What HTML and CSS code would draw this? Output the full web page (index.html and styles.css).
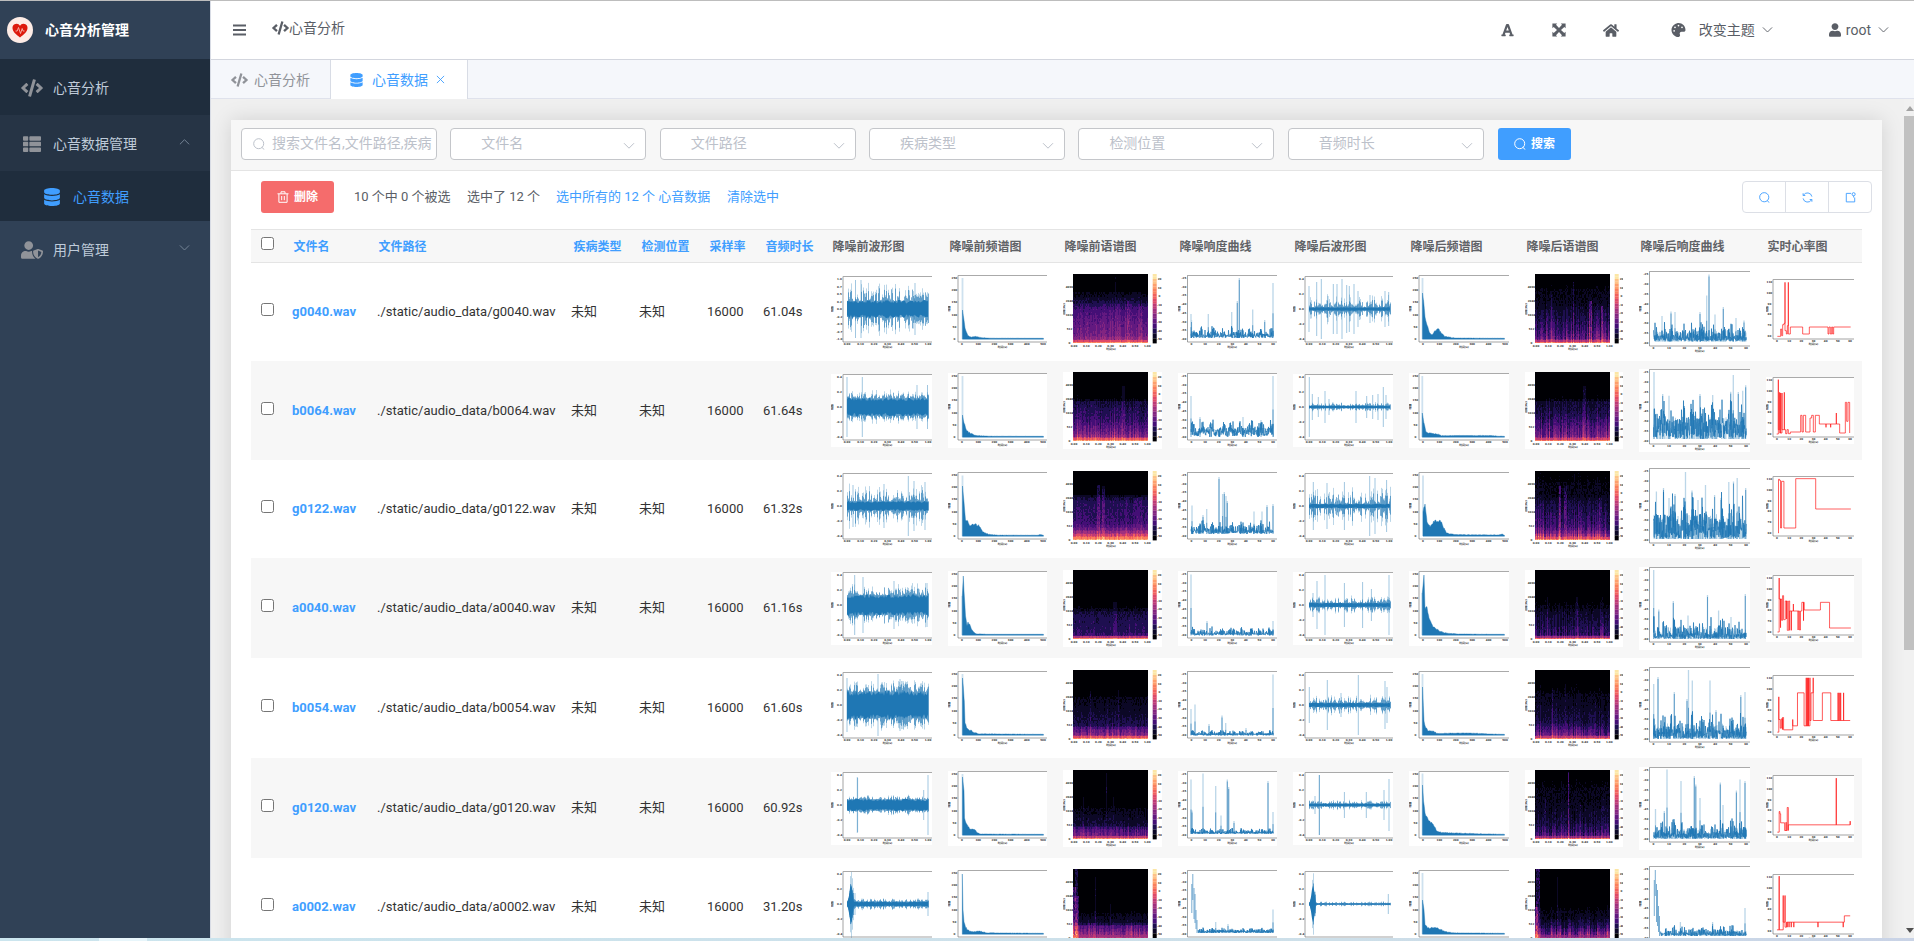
FILE: index.html
```html
<!DOCTYPE html>
<html lang="zh-CN">
<head>
<meta charset="utf-8">
<title>心音分析管理</title>
<link rel="stylesheet" href="styles.css">
</head>
<body>
<svg class="sprite" aria-hidden="true">
  <symbol id="i-code" viewBox="0 0 640 512"><path d="M278.9 511.5l-61-17.7c-6.4-1.8-10-8.5-8.2-14.9L346.2 8.7c1.8-6.4 8.5-10 14.9-8.2l61 17.7c6.4 1.8 10 8.5 8.2 14.9L293.8 503.3c-1.9 6.4-8.5 10.1-14.9 8.2zm-114-112.2l43.5-46.4c4.6-4.9 4.3-12.7-.8-17.2L117 256l90.6-79.7c5.1-4.5 5.5-12.3.8-17.2l-43.5-46.4c-4.5-4.8-12.1-5.1-17-.5L3.8 247.2c-5.1 4.7-5.1 12.8 0 17.5l144.1 135.1c4.9 4.6 12.5 4.4 17-.5zm327.2.6l144.1-135.1c5.1-4.7 5.1-12.8 0-17.5L492.1 112.1c-4.8-4.5-12.4-4.3-17 .5L431.6 159c-4.6 4.9-4.3 12.7.8 17.2L523 256l-90.6 79.7c-5.1 4.5-5.5 12.3-.8 17.2l43.5 46.4c4.5 4.9 12.1 5.1 17 .6z"/></symbol>
  <symbol id="i-db" viewBox="0 0 448 512"><path d="M448 73.143v45.714C448 159.143 347.667 192 224 192S0 159.143 0 118.857V73.143C0 32.857 100.333 0 224 0s224 32.857 224 73.143zM448 176v102.857C448 319.143 347.667 352 224 352S0 319.143 0 278.857V176c48.125 33.143 136.208 48.572 224 48.572S399.874 209.143 448 176zm0 160v102.857C448 479.143 347.667 512 224 512S0 479.143 0 438.857V336c48.125 33.143 136.208 48.572 224 48.572S399.874 369.143 448 336z"/></symbol>
  <symbol id="i-list" viewBox="0 0 512 512"><path d="M24 32h101a24 24 0 0 1 24 24v80a24 24 0 0 1-24 24H24a24 24 0 0 1-24-24V56a24 24 0 0 1 24-24zM24 192h101a24 24 0 0 1 24 24v80a24 24 0 0 1-24 24H24a24 24 0 0 1-24-24v-80a24 24 0 0 1 24-24zM24 352h101a24 24 0 0 1 24 24v80a24 24 0 0 1-24 24H24a24 24 0 0 1-24-24v-80a24 24 0 0 1 24-24zM205 32h283a24 24 0 0 1 24 24v80a24 24 0 0 1-24 24H205a24 24 0 0 1-24-24V56a24 24 0 0 1 24-24zM205 192h283a24 24 0 0 1 24 24v80a24 24 0 0 1-24 24H205a24 24 0 0 1-24-24v-80a24 24 0 0 1 24-24zM205 352h283a24 24 0 0 1 24 24v80a24 24 0 0 1-24 24H205a24 24 0 0 1-24-24v-80a24 24 0 0 1 24-24z"/></symbol>
  <symbol id="i-user" viewBox="0 0 448 512"><path d="M224 256c70.7 0 128-57.3 128-128S294.7 0 224 0 96 57.3 96 128s57.3 128 128 128zm89.6 32h-16.7c-22.2 10.2-46.9 16-72.9 16s-50.6-5.8-72.9-16h-16.7C60.2 288 0 348.2 0 422.4V464c0 26.5 21.5 48 48 48h352c26.5 0 48-21.5 48-48v-41.6c0-74.2-60.2-134.4-134.4-134.4z"/></symbol>
  <symbol id="i-shield" viewBox="0 0 640 512"><path d="M622.3 271.1l-115.2-45c-4.1-1.6-12.6-3.7-22.2 0l-115.2 45c-10.7 4.2-17.7 14-17.7 24.9 0 111.6 68.7 188.8 132.9 213.9 9.6 3.7 18 1.6 22.2 0C558.4 489.9 640 420.5 640 296c0-10.9-7-20.7-17.7-24.9zM496 462.4V273.3l95.5 37.3c-5.6 87.1-60.9 135.4-95.5 151.8zM224 256c70.7 0 128-57.3 128-128S294.7 0 224 0 96 57.3 96 128s57.3 128 128 128zm96 40c0-2.5.8-4.8 1.1-7.2-2.5-.1-4.9-.8-7.5-.8h-16.7c-22.2 10.2-46.9 16-72.9 16s-50.6-5.8-72.9-16h-16.7C60.2 288 0 348.2 0 422.4V464c0 26.5 21.5 48 48 48h352c6.8 0 13.3-1.5 19.2-4-54-42.9-99.2-116.7-99.2-212z"/></symbol>
  <symbol id="i-palette" viewBox="0 0 512 512"><path d="M204.3 5C104.9 24.4 24.8 104.3 5.2 203.4c-37 187 131.7 326.4 258.8 306.7 41.2-6.4 61.4-54.6 42.5-91.7-23.1-45.4 9.9-98.4 60.9-98.4h79.7c35.8 0 64.8-29.6 64.9-65.3C511.5 97.1 368.1-26.9 204.3 5zM96 320c-17.7 0-32-14.3-32-32s14.3-32 32-32 32 14.3 32 32-14.3 32-32 32zm32-128c-17.7 0-32-14.3-32-32s14.3-32 32-32 32 14.3 32 32-14.3 32-32 32zm128-64c-17.7 0-32-14.3-32-32s14.3-32 32-32 32 14.3 32 32-14.3 32-32 32zm128 64c-17.7 0-32-14.3-32-32s14.3-32 32-32 32 14.3 32 32-14.3 32-32 32z"/></symbol>
  <symbol id="i-home" viewBox="0 0 576 512"><path d="M280.37 148.26L96 300.11V464a16 16 0 0 0 16 16l112.06-.29a16 16 0 0 0 15.92-16V368a16 16 0 0 1 16-16h64a16 16 0 0 1 16 16v95.64a16 16 0 0 0 16 16.05L464 480a16 16 0 0 0 16-16V300L295.67 148.26a12.19 12.19 0 0 0-15.3 0zM571.6 251.47L488 182.56V44.05a12 12 0 0 0-12-12h-56a12 12 0 0 0-12 12v72.61L318.47 43a48 48 0 0 0-61 0L4.34 251.47a12 12 0 0 0-1.6 16.9l25.5 31A12 12 0 0 0 45.15 301l235.22-193.74a12.19 12.19 0 0 1 15.3 0L530.9 301a12 12 0 0 0 16.9-1.6l25.5-31a12 12 0 0 0-1.7-16.93z"/></symbol>
  <symbol id="i-expand" viewBox="0 0 14 14"><path d="M.4.4h4.800L4 1.700l3 3.300 3-3.300L8.800.4h4.800v4.800L12.300 4 9 7l3.300 3 1.300-1.200v4.800H8.800L10 12.300 7 9l-3 3.300 1.200 1.300H.4V8.800L1.700 10 5 7 1.700 4 .4 5.200z"/></symbol>
  <symbol id="i-font" viewBox="0 0 448 512"><path fill-rule="evenodd" d="M432 416h-23.400L277.900 53.700A32 32 0 0 0 247.600 32h-47.200a32 32 0 0 0-30.300 21.700L39.400 416H16a16 16 0 0 0-16 16v32a16 16 0 0 0 16 16h128a16 16 0 0 0 16-16v-32a16 16 0 0 0-16-16h-19.600l23.300-64h152.600l23.300 64H304a16 16 0 0 0-16 16v32a16 16 0 0 0 16 16h128a16 16 0 0 0 16-16v-32a16 16 0 0 0-16-16zM176.900 272L224 142.500 271.200 272z"/></symbol>
  <symbol id="i-bars" viewBox="0 0 13 12"><path d="M0 .4h13v2H0zM0 5h13v2H0zM0 9.6h13v2H0z"/></symbol>
  <symbol id="i-down" viewBox="0 0 12 8"><path class="line" d="M1 1.2l5 5 5-5"/></symbol>
  <symbol id="i-up" viewBox="0 0 12 8"><path class="line" d="M1 6.5l5-5 5 5"/></symbol>
  <symbol id="i-search" viewBox="0 0 12 12"><circle class="line" cx="5.700" cy="5.700" r="5"/><path class="line" d="M8.800 9.300l2.500 2.300"/></symbol>
  <symbol id="i-close" viewBox="0 0 10 10"><path class="line" d="M1 1l8 8M9 1L1 9"/></symbol>
  <symbol id="i-trash" viewBox="0 0 12 12"><path class="line" d="M.5 2.8h11M4 2.5V.8h4v1.7M1.9 3v8.3h8.2V3M4.7 5v4.2M7.3 5v4.2"/></symbol>
  <symbol id="i-refresh" viewBox="0 0 12 12"><path class="line" d="M1.2 1.4v2.4h2.4M1.5 3.6A5 5 0 0 1 10.8 5M1.2 7a5 5 0 0 0 9.3 1.4M10.8 10.6V8.2H8.4"/></symbol>
  <symbol id="i-share" viewBox="0 0 12 12"><path class="line" d="M6.600 1.500H1.400v9.300h9.200V6"/><circle class="line" cx="9.400" cy="2.400" r="1.700"/><path class="line" d="M9.400 4v2"/></symbol>
</svg>

<div class="app">
  <aside class="side">
    <div class="brand">
      <svg class="logo" viewBox="0 0 26 26"><circle cx="13" cy="13" r="13" fill="#fdece6"/><path d="M13 20.5C9 17.500 5.500 14.500 5.500 11A4 4 0 0 1 13 8.800 4 4 0 0 1 20.500 11C20.500 14.500 17 17.500 13 20.500z" fill="#dd1a0c"/><path d="M8.500 14h1.700l1.300-3.500 2 6 1.700-5 .8 2.500h1.500" fill="none" stroke="#f8b5ab" stroke-width=".9"/></svg>
      <span>心音分析管理</span>
    </div>
    <div class="item dark"><svg class="ic w22"><use href="#i-code"/></svg><span>心音分析</span></div>
    <div class="item mid"><svg class="ic w22 h18"><use href="#i-list"/></svg><span>心音数据管理</span><svg class="arr"><use href="#i-up"/></svg></div>
    <div class="item sub"><svg class="ic w18"><use href="#i-db"/></svg><span>心音数据</span></div>
    <div class="item"><svg class="ic w22 h18"><use href="#i-shield"/></svg><span>用户管理</span><svg class="arr"><use href="#i-down"/></svg></div>
  </aside>

  <div class="main">
    <header class="top">
      <svg class="bars"><use href="#i-bars"/></svg>
      <div class="crumb"><svg><use href="#i-code"/></svg><span>心音分析</span></div>
      <div class="tools">
        <svg class="t-font"><use href="#i-font"/></svg>
        <svg class="t-exp"><use href="#i-expand"/></svg>
        <svg class="t-home"><use href="#i-home"/></svg>
        <div class="theme"><svg class="t-pal"><use href="#i-palette"/></svg><span>改变主题</span><svg class="dn"><use href="#i-down"/></svg></div>
        <div class="who"><svg class="t-user"><use href="#i-user"/></svg><span>root</span><svg class="dn"><use href="#i-down"/></svg></div>
      </div>
    </header>
    <nav class="tabs">
      <div class="tab t1"><svg class="tc"><use href="#i-code"/></svg><span>心音分析</span></div>
      <div class="tab t2"><svg class="td"><use href="#i-db"/></svg><span>心音数据</span><svg class="tx"><use href="#i-close"/></svg></div>
    </nav>
    <div class="view">
      <section class="card">
        <div class="filters">
          <div class="field search"><svg><use href="#i-search"/></svg><span>搜索文件名,文件路径,疾病</span></div>
          <div class="field sel"><span>文件名</span><svg><use href="#i-down"/></svg></div>
          <div class="field sel"><span>文件路径</span><svg><use href="#i-down"/></svg></div>
          <div class="field sel"><span>疾病类型</span><svg><use href="#i-down"/></svg></div>
          <div class="field sel"><span>检测位置</span><svg><use href="#i-down"/></svg></div>
          <div class="field sel"><span>音频时长</span><svg><use href="#i-down"/></svg></div>
          <div class="btn blue"><svg><use href="#i-search"/></svg><span>搜索</span></div>
        </div>
        <div class="actions">
          <div class="btn red"><svg><use href="#i-trash"/></svg><span>删除</span></div>
          <span class="a1">10 个中 0 个被选</span>
          <span class="a2">选中了 12 个</span>
          <a class="a3">选中所有的 12 个 心音数据</a>
          <a class="a4">清除选中</a>
          <div class="group">
            <div><svg><use href="#i-search"/></svg></div>
            <div><svg><use href="#i-refresh"/></svg></div>
            <div><svg><use href="#i-share"/></svg></div>
          </div>
        </div>
        <div class="table" id="table">
          <div class="row head">
            <div><i class="cb"></i></div>
            <div class="lk">文件名</div><div class="lk">文件路径</div><div class="lk">疾病类型</div><div class="lk">检测位置</div><div class="lk">采样率</div><div class="lk">音频时长</div>
            <div>降噪前波形图</div><div>降噪前频谱图</div><div>降噪前语谱图</div><div>降噪响度曲线</div><div>降噪后波形图</div><div>降噪后频谱图</div><div>降噪后语谱图</div><div>降噪后响度曲线</div><div>实时心率图</div>
          </div>
        </div>
      </section>
      <div class="sbar"><i class="up"></i><i class="thumb"></i><i class="down"></i></div>
    </div>
  </div>
</div>
<div class="strip"><i></i></div>
<script src="charts.js"></script>
</body>
</html>
```
FILE: styles.css
```css
* { box-sizing: border-box; }
body { margin: 0; width: 1914px; height: 941px; overflow: hidden; background: #f0f0f0; color: #5a5e66; font: 14px/20px Roboto, "Noto Sans CJK SC", sans-serif; display: flex; flex-direction: column; }
.sprite { position: absolute; width: 0; height: 0; }
svg { display: block; flex: none; fill: currentColor; }
.line { fill: none; stroke: currentColor; stroke-width: 1; }
span, a { white-space: nowrap; }

.app { display: flex; height: 938px; flex: none; border-top: 1px solid #bdbdbd; }
.side { width: 210px; flex: none; background: #304156; }
.brand { height: 58px; display: flex; align-items: center; padding-left: 7px; gap: 12px; color: #fff; font-weight: bold; }
.logo { width: 26px; height: 26px; }
.item { height: 56px; display: flex; align-items: center; padding: 2px 0 0 21px; color: #bfcbd9; }
.item .ic { width: 22px; height: 18px; margin-right: 10px; color: #909399; }
.item.dark { background: #1f2d3d; }
.item.mid { background: #263445; }
.item.sub { background: #1f2d3d; height: 50px; padding-left: 43px; color: #409eff; }
.item.sub .ic { color: #409eff; margin-right: 12px; width: 18px; }
.item .arr { width: 11px; height: 8px; margin: -5px 20px 0 auto; color: #7c8b9d; }

.main { flex: 1; display: flex; flex-direction: column; min-width: 0; border-left: 1px solid #d8dce5; }
.top { height: 59px; background: #fff; border-bottom: 1px solid #d3d6de; display: flex; align-items: center; padding-left: 22px; flex: none; }
.bars { width: 13px; height: 12px; margin-right: 26px; }
.crumb { display: flex; align-items: center; margin-top: -5px; }
.crumb svg { width: 17px; height: 14px; }
.tools { display: flex; align-items: center; margin-left: auto; padding-right: 25px; }
.t-font { width: 13px; height: 14px; margin-right: 38px; }
.t-exp { width: 14px; height: 14px; margin-right: 37px; }
.t-home { width: 16px; height: 15px; margin-right: 52px; }
.theme, .who { display: flex; align-items: center; }
.t-pal { width: 15px; height: 14px; margin-right: 13px; }
.dn { width: 11px; height: 8px; margin-left: 7px; }
.who { margin-left: 56px; }
.t-user { width: 12px; height: 14px; margin-right: 5px; }
.tabs { height: 39px; flex: none; display: flex; background: #f5f7fb; border-bottom: 1px solid #dfe2ec; }
.tab { display: flex; align-items: center; border-right: 1px solid #d8dce5; height: 39px; color: #909399; }
.t1 { width: 120px; padding-left: 20px; }
.tc { width: 17px; height: 14px; margin-right: 6px; }
.t2 { width: 137px; padding-left: 19px; background: #fff; color: #409eff; }
.td { width: 13px; height: 14px; margin-right: 9px; }
.tx { width: 9px; height: 9px; margin-left: 8px; }

.view { flex: 1; display: flex; overflow: hidden; padding: 21px 0 0 20px; background: #f0f0f0; }
.card { width: 1651px; height: 900px; flex: none; background: #fff; box-shadow: 0 0 20px rgba(0,0,0,.13); }
.filters { height: 51px; background: #f7f7f7; border-bottom: 1px solid #e4e4e4; display: flex; gap: 13.350px; padding: 8px 0 0 10px; }
.field { width: 196px; height: 32px; border: 1px solid #c4c6ca; border-radius: 4px; background: #fff; color: #bcc1ca; display: flex; align-items: center; overflow: hidden; }
.search svg { width: 12px; height: 12px; margin: 0 7px 0 11px; }
.sel { padding: 0 10px 0 30px; justify-content: space-between; }
.sel svg { width: 12px; height: 8px; margin-top: 3px; }
.field span { margin-top: -3px; }
.btn { width: 73px; height: 32px; border-radius: 3px; color: #fff; display: flex; align-items: center; justify-content: center; gap: 5px; font-size: 12px; font-weight: 500; flex: none; }
.btn svg { width: 12px; height: 12px; }
.blue { background: #409eff; margin-left: 1px; }
.red { background: #f56c6c; }
.btn span { font-weight: bold; }
.actions { height: 58px; display: flex; align-items: flex-start; padding: 10px 10px 0 30px; font-size: 13px; line-height: 32px; }
.a1 { width: 113px; margin-left: 20px; }
.a2 { width: 89px; }
.a3 { width: 171px; color: #409eff; }
.a4 { color: #409eff; }
.group { margin-left: auto; display: flex; width: 130px; height: 32px; border: 1px solid #dcdfe6; border-radius: 4px; color: #409eff; }
.group div { flex: 1; display: flex; align-items: center; justify-content: center; }
.group div + div { border-left: 1px solid #dcdfe6; }
.group svg { width: 11px; height: 11px; }

.table { margin-left: 20px; width: 1611px; }
.row { display: grid; grid-template-columns: 31px 85px 195px 68px 68px 56px 67px 117px 115px 115px 115px 116px 116px 114px 127px 106px; align-items: center; font-size: 13px; color: #333; }
.row > div { padding-left: 10px; white-space: nowrap; }
.row > div:nth-child(n+4):nth-child(-n+7) { padding-left: 9px; }
.row.even { background: #f7f7f7; }
.head { height: 34px; background: #f7f7f7; border-top: 1px solid #e4e4e4; border-bottom: 1px solid #e4e4e4; font-size: 12px; font-weight: bold; color: #606266; }
.head > div, .head > div:nth-child(n+4):nth-child(-n+7) { padding: 2px 0 0 11.500px; }
.head > div:first-child { padding: 0 0 0 10px; }
.head .lk, .name { color: #409eff; }
.name { font-weight: bold; }
.cb { display: block; width: 13px; height: 13px; border: 1px solid #767676; border-radius: 2.500px; background: #fff; margin-top: -5px; }
.row svg { overflow: hidden; background: #fff; }
.tick { font: bold 2.700px "DejaVu Sans", "Noto Sans CJK SC", sans-serif; fill: #333; text-anchor: middle; }

.sbar { width: 10px; margin: -21px 0 0 auto; background: #f1f1f1; position: relative; flex: none; }
.sbar i { display: block; }
.up { width: 8px; height: 5px; margin: 7px 0 5px 2px; background: #a3a3a3; clip-path: polygon(50% 0, 100% 100%, 0 100%); }
.thumb { height: 534px; background: #c1c1c1; }
.down { position: absolute; left: 2px; bottom: 5px; width: 8px; height: 5px; background: #505050; clip-path: polygon(0 0, 100% 0, 50% 100%); }
.strip { height: 3px; flex: none; background: linear-gradient(90deg, #cbe5ee, #cddfe9 70%, #c9d3e6); padding-left: 99px; }
.strip i { display: block; width: 48px; height: 3px; background: #e8f6fb; }
```
FILE: charts.js
```js
const BLUE = '#1f77b4';
let seed = 7;
const rnd = () => (seed = (seed * 16807) % 2147483647) / 2147483647;
const f1 = n => n.toFixed(1);

function frame(w, h, left, bottom, xs, ys) {
  let s = `<path d="M${left} .5H${w}M${left} .5V${bottom}H${w}" fill="none" stroke="#666" stroke-width=".6"/><path d="M${left} .5H${w}" stroke="#aaa" stroke-width="1"/>`;
  xs.forEach((t, i) => { s += `<text class="tick" x="${f1(left + 4 + i * (w - left - 8) / (xs.length - 1))}" y="${bottom + 3.4}">${t}</text>`; });
  ys.forEach((t, i) => { s += `<text class="tick" x="${left - 3.6}" y="${f1(bottom - 2 - i * (bottom - 6) / (ys.length - 1))}">${t}</text>`; });
  s += `<text class="tick" x="${(w + left) / 2}" y="${bottom + 6.3}">时间(s)</text>`;
  s += `<text class="tick" transform="translate(2.2 ${bottom / 2}) rotate(-90)">幅值</text>`;
  return s;
}
const svg = (w, h, body) => `<svg width="${w}" height="${h}" viewBox="0 0 ${w} ${h}">${body}</svg>`;
const T7 = ['0.00', '0.10', '0.20', '0.30', '0.40', '0.50', '1.00'];
const T6 = ['0', '10', '20', '30', '40', '50', '60'];
const Y9 = ['-1.0', '-0.7', '-0.5', '-0.2', '0.0', '0.2', '0.5', '0.7', '1.0'];
const Y5 = ['-0.4', '-0.2', '0.0', '0.2', '0.4'];

/* core: solid half height, noise: mean peak reach, spikes: [x, half height] */
function wave(w, c) {
  let light = '', mid = '', top = '', bot = '';
  for (let x = 16; x <= 97; x += 1) {
    const burst = c.burst && x < 23 ? 30 * Math.exp(-Math.pow((x - 20) / 2, 2)) : 0;
    const g = Math.pow(rnd(), 1.6);
    const a = c.core + c.noise * g * (.8 + .3 * rnd()) + burst, b = c.core + c.noise * g * (.8 + .3 * rnd()) + burst;
    const p = .5 + .4 * rnd();
    if (rnd() < .85) light += `M${x + .5} ${f1(33 - a)}V${f1(33 + b)}`;
    mid += `M${x + .5} ${f1(33 - c.core - (a - c.core) * p * .9)}V${f1(33 + c.core + (b - c.core) * p * .9)}`;
    top += `L${x} ${f1(33 - c.core * (.7 + .45 * rnd()) - burst * .6)}`;
    bot = `L${x} ${f1(33 + c.core * (.7 + .45 * rnd()) + burst * .6)}` + bot;
  }
  let sp = '';
  (c.s || []).forEach(([x, a]) => { sp += `M${x} ${33 - a}V${33 + a}`; });
  return svg(w, 73, `<path d="${light}" stroke="${BLUE}" stroke-opacity=".3"/><path d="${mid}" stroke="${BLUE}" stroke-opacity=".6"/><path d="${sp}" stroke="${BLUE}" stroke-opacity=".42"/><path d="M${top.slice(1)}${bot}Z" fill="${BLUE}"/>` + frame(w, 73, 12, 66, T7, c.n9 ? Y9 : Y5));
}

function spectrum(w, c) {
  const pts = c.e.concat([[95.5, 63.4]]);
  let d = `M${pts[0][0]} 64.2`;
  pts.forEach(([x, y], i) => {
    d += `L${x} ${y}`;
    if (i < pts.length - 1) {
      const [x2, y2] = pts[i + 1];
      for (let q = x + .8; q < x2; q += .8) d += `L${f1(q)} ${f1(Math.min(63.3, y + (y2 - y) * (q - x) / (x2 - x) + (rnd() - .5) * Math.min(2.5, (64 - y) * .25)))}`;
    }
  });
  d += 'V64.2Z';
  const sp = c.p ? `<path d="M${pts[0][0]} ${c.p}V64" stroke="${BLUE}" stroke-opacity=".22" stroke-width="1.8"/>` : '';
  return svg(w, 75, sp + `<path d="${d}" fill="${BLUE}" stroke="${BLUE}" stroke-width=".4"/>` + frame(w, 75, 10, 67, ['0', '100', '200', '300', '400', '500'], ['0', '50', '100', '150', '200', '250']));
}

/* b: base line, n: noise height, s: [x, peak y], q: noise exponent, lift: quiet level above the base */
function loud(w, h, c, big) {
  const x0 = big ? 14.5 : 13, x1 = big ? 107 : 95, bottom = big ? 75 : 67, st = big ? .5 : .5;
  let line = '', dark = '', haze = '';
  for (let x = x0 + (c.burst ? 7 : 0); x <= x1; x += st) {
    const m = .5 + .5 * Math.sin(x / 3.1) ** 2;
    const y = c.b - 1 - c.n * Math.pow(rnd(), c.q || (big ? 1.9 : 1.5)) * m;
    line += `L${f1(x)} ${f1(y)}L${f1(x + st / 2)} ${f1(c.b - rnd() * (c.lift || c.n * .3))}`;
    if (big && rnd() < .5) haze += `M${f1(x)} ${c.b}V${f1(c.b - c.n * (.2 + .35 * rnd()))}`;
  }
  let sp = '';
  c.s.forEach(([x, y], i) => { sp += `M${x} ${c.b - 2}V${y}`; if (i % 2) dark += `M${x} ${c.b}V${y + 2}`; else dark += `M${x} ${c.b}V${f1(c.b - (c.b - y) * .45)}`; });
  if (c.burst) dark += `M${x0 + .8} ${c.b - 20}V14M${x0 + 1.800} 4V30M${x0 + 3} 18V${c.b - 14}M${x0 + 4} 24V${c.b - 10}M${x0 + 5} 40V${c.b - 4}M${x0 + 6} 50V${c.b}`;
  return svg(w, h, `<path d="${sp}" stroke="${BLUE}" stroke-opacity=".3" stroke-width="1.3"/><path d="${haze}" stroke="${BLUE}" stroke-opacity=".35"/><path d="${dark}" stroke="${BLUE}" stroke-opacity=".6"/><path d="M${line.slice(1)}" fill="none" stroke="${BLUE}" stroke-width=".75" stroke-opacity=".95"/>` + frame(w, h, big ? 10.5 : 9.5, bottom, T6, ['-60', '-55', '-50', '-45', '-40', '-35', '-30', '-25']));
}

const MAGMA = [[0, 0, 4], [12, 8, 38], [30, 15, 80], [68, 15, 118], [98, 25, 128], [130, 37, 129], [160, 48, 126], [190, 58, 119], [222, 73, 104], [241, 96, 93], [250, 127, 94], [254, 159, 109], [254, 194, 135], [252, 230, 165]];
const rgb = i => `rgb(${MAGMA[i].join()})`;
/* p: profile [height from floor, level], v: column variation, k: bright columns [from, to, gain, reach] */
function spectro(w, c) {
  const W = 75, rows = 46, ch = 69.3 / rows, out = MAGMA.map(() => '');
  const cols = Array.from({ length: W }, () => 1 + (rnd() - .5) * 2 * c.v + (rnd() < .09 ? c.v : 0));
  for (let r = 0; r < rows; r++) {
    const f = (rows - r - .5) / rows;
    let i = 0;
    while (i < c.p.length - 2 && c.p[i + 1][0] < f) i++;
    const [a, va] = c.p[i], [b, vb] = c.p[i + 1];
    const base = (va + (vb - va) * Math.min(1, Math.max(0, (f - a) / (b - a)))) * .9;
    for (let x = 0; x < W; x++) {
      let v = base * (f < .04 ? 1 + (cols[x] - 1) * .3 : cols[x]) + (rnd() - .5) * .07 * (base > .03 ? 1 : .3);
      (c.k || []).forEach(([k0, k1, g, reach]) => { if (x >= k0 && x <= k1 && f < reach) v += g * (.3 + rnd() * .6); });
      const q = Math.max(0, Math.min(13, Math.round(v * 13)));
      if (q) out[q] += `M${x} ${f1(r * ch)}h1v${ch.toFixed(2)}h-1z`;
    }
  }
  let s = `<g transform="translate(10.300 0)" shape-rendering="crispEdges"><rect width="75" height="69.300" fill="#000004"/>` + out.map((d, i) => d ? `<path d="${d}" fill="${rgb(i)}"/>` : '').join('') + '</g>';
  for (let i = 0; i < 28; i++) s += `<rect x="89.700" y="${f1(i * 2.475)}" width="4" height="2.600" fill="${rgb(13 - Math.floor(i / 2))}"/>`;
  ['20', '10', '0', '-10', '-20', '-30', '-40', '-50'].forEach((t, i) => { s += `<text class="tick" x="96.500" y="${6 + i * 8.6}">${t}</text>`; });
  ['0', '512', '1024', '2048', '4096'].forEach((t, i) => { s += `<text class="tick" x="6.500" y="${f1(69.5 - i * 13.8)}">${t}</text>`; });
  T7.forEach((t, i) => { s += `<text class="tick" x="${f1(11 + i * 12.2)}" y="72.800">${t}</text>`; });
  s += `<text class="tick" x="48" y="76">时间(s)</text><text class="tick" transform="translate(2.200 35) rotate(-90)">频率(Hz)</text>`;
  return svg(w, 77, s);
}

function heart(c) {
  return svg(88, 67, `<g transform="scale(${1 / c.sx} ${1 / 3}) translate(${-c.o[0]} ${-c.o[1]})"><path d="${c.d}" fill="none" stroke="#ff1414" stroke-opacity=".78" stroke-width="2.600"/></g>` + frame(88, 67, 7, 60, T6, ['60', '70', '80', '90', '100', '110']));
}

const ROWS = [
  { n: 'g0040', t: '61.04s', h: 98,
    w1: { core: 8, noise: 19, n9: 1, s: [[24.500, 29], [30, 29], [84, 26]] },
    f1: { p: 3, e: [[14.500, 35], [15.500, 42], [17, 53], [20, 61], [24, 62], [27, 61.300], [32, 62.500], [40, 63.200]] },
    s1: { v: .13, p: [[0, .98], [.025, .75], [.05, .48], [.12, .38], [.3, .33], [.5, .25], [.58, .15], [.7, .05], [.8, 0], [1, 0]], k: [[54, 56, .16, .62], [42, 42, .07, .95], [67, 68, .1, .55]] },
    l1: { b: 63, n: 11, s: [[13, 39], [13.500, 45], [53.700, 37], [59.300, 26], [30.300, 39], [61.300, 3], [74.700, 34.500], [86.700, 45], [95, 8]] },
    w2: { core: 1.600, noise: 13, s: [[16, 23], [23.700, 27], [28.300, 30], [35, 13], [40.300, 25], [44, 25], [49, 30], [53.700, 24], [56.300, 23], [61, 25], [65, 18], [77, 14], [92, 18], [95.700, 17]] },
    f2: { p: 3, e: [[13.500, 18], [14.500, 25], [16, 42], [18, 50], [21, 58], [23, 60], [26, 55.500], [30, 54], [32, 58], [36, 61.500], [45, 63]] },
    s2: { v: .4, p: [[0, .95], [.03, .6], [.07, .35], [.2, .24], [.35, .17], [.6, .06], [.8, .03], [1, 0]], k: [[54, 56, .25, .6], [66, 67, .22, .55], [38, 38, .14, .9], [16, 16, .12, .7]] },
    l2: { b: 70.500, n: 20, s: [[23, 45], [32, 40.500], [36, 41], [61, 41], [67.700, 24.500], [70, 3.500], [76, 43.500], [84.300, 36], [97, 47], [105, 49.500]] },
    hr: { sx: 3, o: [738, 55], d: 'M772 227H782V205H785V225H788V192H792V188H795V65V210H799V220H802V195H805V65V220H811V199H848V220H868V199H924V220H927V199H931V220H935V199H938V220H941V199H992' } },
  { n: 'b0064', t: '61.64s', h: 99,
    w1: { core: 8.500, noise: 9, s: [[16, 30], [31.300, 30], [86, 22], [96.500, 22]] },
    f1: { p: 3, e: [[14.500, 42], [16, 50], [19, 58], [23, 60.500], [28, 62.500], [40, 63.200]] },
    s1: { v: .25, p: [[0, 1], [.03, .75], [.07, .45], [.15, .34], [.3, .22], [.5, .15], [.58, .12], [.6, .03], [1, 0]], k: [[49, 51, .1, .8]] },
    l1: { b: 64, n: 17, q: 1, lift: 9, s: [[13, 23], [22, 44], [65, 44], [83, 47], [95, 3]] },
    w2: { core: 1.200, noise: 3.500, s: [[16.300, 30], [19.300, 13], [25.300, 10], [32, 16], [36, 8], [63, 16], [73.700, 11], [79.700, 12], [85, 13], [90.300, 20], [93, 12]] },
    f2: { p: 3, e: [[13.300, 40], [15, 50], [17, 59], [22, 60.500], [28, 61], [33, 62.700], [50, 62.500], [80, 62.600]] },
    s2: { v: .35, p: [[0, .95], [.03, .65], [.08, .38], [.2, .3], [.35, .18], [.5, .12], [.58, .1], [.6, .03], [1, 0]], k: [[48, 50, .12, .8]] },
    l2: { b: 70, n: 40, q: 1.200, lift: 22, s: [[15, 3], [23.700, 25], [30, 26.700], [61, 25], [73.700, 26], [91.700, 22.700], [94.300, 6], [99.300, 23], [103.700, 21.700], [106.700, 16.300]] },
    hr: { sx: 3, o: [738, 352], d: 'M770 523H775V360V510H779V398V520H782V400V520H786V400V510H793V398V510H797V522H801V510H805V522H811V517H842V467H846V517H850V467H857V517H870V475H875V467H880V517H886V467H898V493H918V503V493H932V503V493H949V460V493H959V520H976V428H980V485H984V428H989V520' } },
  { n: 'g0122', t: '61.32s', h: 98,
    w1: { core: 4.500, noise: 18, s: [[22, 21], [77.300, 30], [83, 25], [53, 22], [94, 24]] },
    f1: { p: 3.500, e: [[14.500, 14], [16, 30], [17.500, 48], [20, 50], [22, 54], [25, 52], [31, 54], [33, 57], [35, 60], [40, 62.300], [50, 63.200], [90, 63.300], [92, 62.400]] },
    s1: { v: .13, p: [[0, 1], [.04, .8], [.1, .52], [.18, .32], [.25, .23], [.55, .18], [.62, .12], [.66, .02], [1, 0]], k: [[24, 26, .16, .8], [29, 31, .16, .78], [61, 68, .06, .6]] },
    l1: { b: 62, n: 13, s: [[14, 33.500], [25, 43], [28.700, 37], [41, 5], [44.600, 22], [46.300, 20], [48, 24], [49.300, 29], [76, 39.500], [89, 33], [84, 39.500], [95, 32]] },
    w2: { core: 2, noise: 17, s: [[20.300, 24], [34, 23], [51.400, 24], [76.700, 30], [82, 28], [93.600, 26]] },
    f2: { p: 3.500, e: [[14, 40], [16, 32], [18, 50], [21, 55], [23, 52], [26, 48], [28, 50], [31, 48], [35, 56], [38, 61], [45, 62.600], [90, 63], [93, 62]] },
    s2: { v: .35, p: [[0, .95], [.04, .62], [.1, .38], [.2, .23], [.55, .11], [.65, .05], [1, .02]], k: [[24, 25, .25, .78], [29, 31, .2, .78], [64, 66, .14, .6]] },
    l2: { b: 71, n: 48, q: 1.700, lift: 20, s: [[17.400, 23.500], [24.500, 20], [46.500, 4], [53, 22.500], [66.500, 17], [75.600, 27], [89.800, 14], [94.500, 13.500], [98.200, 10], [106.700, 20], [30, 30], [36, 26], [59, 32], [82, 30]] },
    hr: { sx: 2.958, o: [1260, 62], d: 'M1296 233H1297V72H1300V75H1303V218H1306V78H1313V218H1348V70H1407V161H1511' } },
  { n: 'a0040', t: '61.16s', h: 100,
    w1: { core: 9.500, noise: 13, s: [[23.700, 30], [32, 28], [63, 24], [96, 22]] },
    f1: { p: 25, e: [[14.300, 25], [15.300, 5], [16, 20], [17.500, 45], [19, 55], [20, 51], [24, 59], [28, 62.800], [40, 63.300]] },
    s1: { v: .12, p: [[0, 1], [.025, .68], [.05, .26], [.1, .19], [.3, .16], [.4, .12], [.43, .04], [.6, 0], [1, 0]], k: [[40, 43, .08, .55], [56, 56, .12, .2], [21, 21, .12, .2]] },
    l1: { b: 64.500, n: 8, s: [[13, 3.500], [29, 50], [95, 50]] },
    w2: { core: 2, noise: 7, s: [[24, 24], [32, 30], [51.400, 22], [69.600, 23], [78.400, 16], [96, 30], [20, 12]] },
    f2: { p: 22, e: [[13.300, 22], [15, 4], [16, 38], [18, 36], [20, 47], [24, 56], [30, 60], [38, 62.300], [50, 63]] },
    s2: { v: .4, p: [[0, .95], [.025, .55], [.06, .22], [.2, .15], [.4, .09], [.45, .04], [.6, .02], [1, 0]], k: [[41, 42, .12, .6], [12, 12, .1, .6]] },
    l2: { b: 72, n: 22, s: [[14.700, 3], [19.800, 42.500], [49, 48.500], [34.300, 34], [79.600, 43.500], [68.500, 28], [92, 50], [106.300, 27]] },
    hr: { sx: 2.958, o: [1260, 358], d: 'M1294 529H1299V367V430H1303V516V430H1306V494H1309V420H1312V492H1317V436H1321V490V436H1323V524H1327V436H1330V524V466H1335V524V466H1341V445V466H1355V523V466H1359V523H1362V466H1366V440H1371V495V440H1373V463H1421V440H1448V517H1511' } },
  { n: 'b0054', t: '61.60s', h: 100,
    w1: { core: 13, noise: 12, s: [[16, 27], [47, 31], [25, 22], [69, 26], [72, 24]] },
    f1: { p: 3, e: [[14.500, 7], [16.300, 30], [17, 52], [19, 57], [24, 60.500], [30, 62.800]] },
    s1: { v: .22, p: [[0, 1], [.03, .72], [.06, .42], [.15, .3], [.2, .15], [.4, .09], [.6, .04], [.7, 0], [1, 0]], k: [[45, 45, .1, .75], [17, 17, .1, .7]] },
    l1: { b: 64.500, n: 4.500, s: [[13, 38], [31, 53], [17, 33.500], [44, 44.500], [47.700, 52], [68, 57], [95, 3.500]] },
    w2: { core: 2, noise: 8, s: [[16.300, 18], [34.300, 25], [65.300, 30], [92, 24], [94, 18], [48, 12]] },
    f2: { p: 3, e: [[13.500, 16], [15, 50], [17, 57], [19, 60], [24, 60], [28, 62.500], [55, 62], [75, 62.800]] },
    s2: { v: .35, p: [[0, .95], [.03, .6], [.06, .34], [.15, .23], [.25, .13], [.5, .07], [.7, .03], [1, 0]], k: [[17, 17, .15, .75], [30, 30, .1, .8], [60, 60, .1, .6]] },
    l2: { b: 71.800, n: 28, s: [[14.700, 17], [19, 10], [49.500, 3], [35.300, 25], [53.300, 13.500], [48, 32], [71, 13.500], [101.800, 28], [106, 25], [77, 43]] },
    hr: { sx: 2.732, o: [1164, -61.500], d: 'M1195 110H1199V4V72H1203V98H1206V70H1209V102V66H1212V103H1237V72V91H1250V-8H1268V91H1274V-53V91H1277V-53V91H1280V-53V91H1284V-53V75H1287V-8H1293V-53V75H1318V-8H1341V75H1361V-8V75H1364V-8V75H1368V-8V75H1376V-8V75H1394' } },
  { n: 'g0120', t: '60.92s', h: 100,
    w1: { core: 5.500, noise: 5, s: [[26.300, 28], [26.600, 27], [97, 30], [92.700, 15]] },
    f1: { p: 3, e: [[14.500, 6], [16, 20], [16.500, 47], [18, 52], [20, 56], [23, 58.500], [26, 58], [29, 61.500], [32, 63]] },
    s1: { v: .25, p: [[0, 1], [.025, .68], [.05, .36], [.15, .26], [.2, .12], [.4, .05], [.5, .02], [.7, 0], [1, 0]], k: [[33, 33, .14, .95], [40, 40, .1, .6], [10, 10, .1, .6]] },
    l1: { b: 63, n: 5, s: [[13, 8.500], [14, 39.500], [25, 2.500], [49.300, 8.500], [37.700, 15], [50.700, 16], [43, 44.500], [90, 10], [95, 41], [56, 50]] },
    w2: { core: 1.300, noise: 4, s: [[26.300, 30], [26.400, 30], [22, 9], [51.400, 13], [73.300, 13], [91, 15], [96, 26]] },
    f2: { p: 2.500, e: [[13.500, 14], [14.500, 30], [16, 42], [20, 50], [24, 53], [28, 60], [32, 61.600], [60, 62.500]] },
    s2: { v: .45, p: [[0, .95], [.025, .55], [.05, .3], [.12, .2], [.25, .12], [.5, .06], [1, .01]], k: [[33, 33, .28, .98], [45, 45, .14, .5], [10, 10, .12, .6], [68, 68, .12, .7]] },
    l2: { b: 71.800, n: 20, s: [[16.500, 42], [25.300, 44], [28, 2.500], [55.300, 9], [42, 14], [56.800, 17.500], [61, 31], [81.300, 15.500], [84, 38], [97.400, 23.500], [101, 12.500], [106, 14]] },
    hr: { sx: 2.732, o: [1164, 238.500], d: 'M1195 410H1200V348H1202V355H1204V382H1215V405H1219V380V405H1222V336H1225V405V388H1356V248V388H1394V377V388' } },
  { n: 'a0002', t: '31.20s', h: 98,
    w1: { core: 2.200, noise: 4, burst: 1, s: [[97, 12], [24, 11]] },
    f1: { e: [[14.300, 4], [15, 40], [16, 52], [19, 60], [25, 62], [31, 61], [38, 62.800]] },
    s1: { v: .25, p: [[0, .6], [.04, .5], [.1, .38], [.18, .28], [.22, .1], [.4, .02], [1, 0]], k: [[0, 2, .35, .75], [3, 5, .22, .6], [2, 4, .2, 1], [22, 22, .12, .9], [37, 37, .1, .5]] },
    l1: { b: 63, n: 4.500, burst: 1, s: [[37.700, 52], [50, 54], [95, 39.500]] },
    w2: { core: .7, noise: 2, burst: 1, s: [[95.300, 10]] },
    f2: { p: 3, e: [[13.500, 30], [15, 40], [16, 55], [19, 58], [28, 58], [35, 61], [42, 62.800]] },
    s2: { v: .5, p: [[0, .55], [.04, .42], [.1, .28], [.18, .16], [.3, .06], [.5, .01], [1, 0]], k: [[0, 2, .35, .45], [1, 4, .25, 1], [22, 22, .12, .9]] },
    l2: { b: 70, n: 11, burst: 1, s: [[41.400, 56], [73.600, 56], [106, 42]] },
    hr: { sx: 2.732, o: [1164, 538.500], d: 'M1194 706H1200V545V706H1211V603V683H1216V603V698H1220V683H1222V698V683H1227V698V683H1233V698V683H1240V698V683H1306V698V683H1375V698V683H1378V664H1394' } }
];

const table = document.getElementById('table');
ROWS.forEach((r, i) => {
  const el = document.createElement('div');
  el.className = 'row' + (i % 2 ? ' even' : '');
  el.style.height = r.h + 'px';
  el.innerHTML = [
    '<i class="cb"></i>', null, `./static/audio_data/${r.n}.wav`, '未知', '未知', '16000', r.t,
    wave(101, r.w1), spectrum(99, r.f1), spectro(99, r.s1), loud(99, 75, r.l1), wave(100, r.w2), spectrum(100, r.f2), spectro(98, r.s2), loud(111, 83, r.l2, true), heart(r.hr)
  ].map(c => c === null ? `<div class="name">${r.n}.wav</div>` : `<div>${c}</div>`).join('');
  table.append(el);
});
```
